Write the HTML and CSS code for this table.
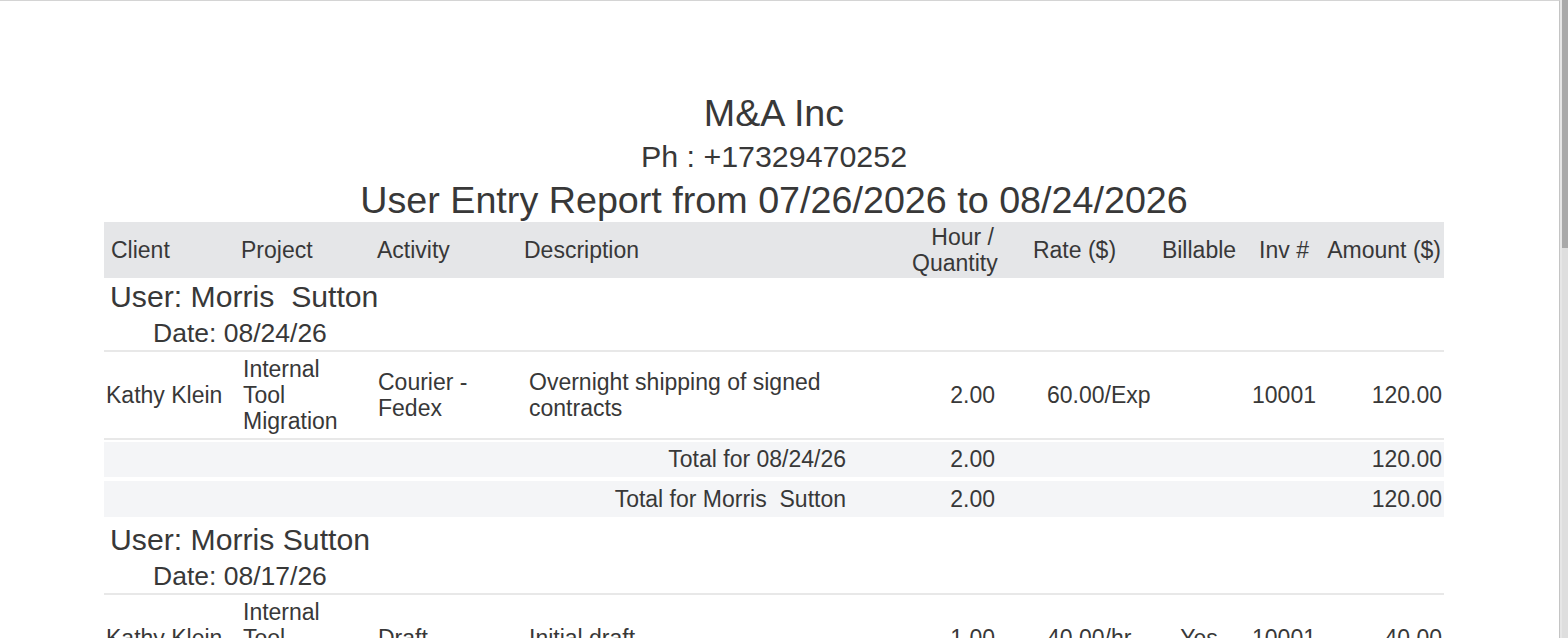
FILE: index.html
```html
<!DOCTYPE html>
<html lang="en">
<head>
<meta charset="utf-8">
<title>User Entry Report</title>
<link rel="stylesheet" href="styles.css">
</head>
<body>
<div class="frame">
  <div class="page">
    <div class="report">
      <div class="company">M&amp;A Inc</div>
      <div class="phone">Ph : +17329470252</div>
      <div class="title">User Entry Report from 07/26/2026 to 08/24/2026</div>
      <table class="grid">
        <colgroup>
          <col class="c-client"><col class="c-project"><col class="c-activity"><col class="c-desc"><col class="c-hour"><col class="c-rate"><col class="c-bill"><col class="c-inv"><col class="c-amt">
        </colgroup>
        <thead>
          <tr>
            <th class="h-client">Client</th>
            <th class="h-project">Project</th>
            <th class="h-activity">Activity</th>
            <th class="h-desc">Description</th>
            <th class="h-hour">Hour / Quantity</th>
            <th class="h-rate">Rate ($)</th>
            <th class="h-bill">Billable</th>
            <th class="h-inv">Inv #</th>
            <th class="h-amt">Amount ($)</th>
          </tr>
        </thead>
        <tbody>
          <tr class="user-row"><td colspan="9">User: Morris&nbsp; Sutton</td></tr>
          <tr class="date-row"><td colspan="9">Date: 08/24/26</td></tr>
          <tr class="entry">
            <td class="b-client">Kathy Klein</td>
            <td class="b-project">Internal Tool Migration</td>
            <td class="b-activity">Courier - Fedex</td>
            <td class="b-desc">Overnight shipping of signed contracts</td>
            <td class="b-hour">2.00</td>
            <td class="b-rate">60.00/Exp</td>
            <td class="b-bill"></td>
            <td class="b-inv">10001</td>
            <td class="b-amt">120.00</td>
          </tr>
          <tr class="total total-date">
            <td colspan="4" class="t-label">Total for 08/24/26</td>
            <td class="b-hour">2.00</td>
            <td></td><td></td><td></td>
            <td class="b-amt">120.00</td>
          </tr>
          <tr class="total total-user">
            <td colspan="4" class="t-label">Total for Morris&nbsp; Sutton</td>
            <td class="b-hour">2.00</td>
            <td></td><td></td><td></td>
            <td class="b-amt">120.00</td>
          </tr>
          <tr class="user-row next-group"><td colspan="9">User: Morris Sutton</td></tr>
          <tr class="date-row"><td colspan="9">Date: 08/17/26</td></tr>
          <tr class="entry">
            <td class="b-client">Kathy Klein</td>
            <td class="b-project">Internal Tool Migration</td>
            <td class="b-activity">Draft</td>
            <td class="b-desc">Initial draft</td>
            <td class="b-hour">1.00</td>
            <td class="b-rate">40.00/hr</td>
            <td class="b-bill">Yes</td>
            <td class="b-inv">10001</td>
            <td class="b-amt">40.00</td>
          </tr>
        </tbody>
      </table>
    </div>
  </div>
  <div class="scrollbar">
    <div class="thumb"></div>
    <div class="track"></div>
  </div>
</div>
</body>
</html>
```

FILE: styles.css
```css
html, body {
  margin: 0;
  padding: 0;
  background: #ffffff;
}

body {
  font-family: "Liberation Sans", Arial, sans-serif;
  color: #383838;
  overflow: hidden;
}

.frame {
  display: flex;
  width: 1568px;
  height: 638px;
}

.page {
  flex: 1;
  border-top: 1px solid #d4d4d4;
  border-right: 1px solid #c4c4c4;
  overflow: hidden;
}

.scrollbar {
  width: 6px;
  border-left: 2px solid #e6e6e6;
  display: flex;
  flex-direction: column;
}

.thumb {
  height: 248px;
  background: #a9a9a9;
}

.track {
  flex: 1;
  background: #dedede;
}

.report {
  width: 1340px;
  margin-left: 104px;
  padding-top: 91px;
}

.company {
  text-align: center;
  font-size: 37.7px;
  line-height: 42px;
}

.phone {
  text-align: center;
  font-size: 30.4px;
  line-height: 44px;
}

.title {
  text-align: center;
  font-size: 37.7px;
  line-height: 44px;
}

.grid {
  width: 1340px;
  table-layout: fixed;
  border-collapse: collapse;
  font-size: 23px;
  line-height: 26px;
}

.grid th,
.grid td {
  padding: 0;
  font-weight: normal;
  vertical-align: middle;
}

.c-client { width: 135px; }
.c-project { width: 135px; }
.c-activity { width: 148px; }
.c-desc { width: 330px; }
.c-hour { width: 148px; }
.c-rate { width: 155px; }
.c-bill { width: 88px; }
.c-inv { width: 82px; }
.c-amt { width: 119px; }

.grid thead tr {
  background: #e5e6e8;
  height: 56px;
}

.h-client { text-align: left; padding-left: 7px !important; }
.h-project { text-align: left; padding-left: 2px !important; }
.h-activity { text-align: left; padding-left: 3px !important; }
.h-desc { text-align: left; padding-left: 2px !important; }
.h-hour { text-align: right; padding-right: 6px !important; padding-left: 60px !important; }
.h-rate { text-align: center; padding-right: 6px !important; }
.h-bill { text-align: center; }
.h-inv { text-align: center; }
.h-amt { text-align: right; padding-right: 3px !important; }

.user-row td {
  height: 38px;
  font-size: 30.2px;
  line-height: 34px;
  padding-left: 6px !important;
}

.user-row.next-group td {
  height: 38px;
  padding-top: 4px !important;
}

.date-row td {
  height: 34px;
  font-size: 26.5px;
  line-height: 30px;
  padding-left: 49px !important;
}

.entry td {
  height: 86px;
  border-top: 2px solid #e8e8e8;
  border-bottom: 2px solid #e8e8e8;
}

.b-client { padding-left: 2px !important; }
.b-project { padding-left: 4px !important; padding-right: 10px !important; }
.b-activity { padding-left: 4px !important; padding-right: 4px !important; }
.b-desc { padding-left: 7px !important; padding-right: 10px !important; }
.b-hour { text-align: right; padding-right: 5px !important; }
.b-rate { padding-left: 47px !important; }
.b-bill { text-align: center; }
.b-inv { text-align: center; }
.b-amt { text-align: right; padding-right: 2px !important; }

.total td {
  background: #f4f5f7;
  height: 36px;
}

.total-date td {
  border-top: 2px solid #f4f5f7;
  box-shadow: inset 0 2px 0 #ffffff;
  height: 37px;
}

.total-user td {
  border-top: 4px solid #ffffff;
}

.t-label {
  text-align: right;
  padding-right: 6px !important;
}
```
